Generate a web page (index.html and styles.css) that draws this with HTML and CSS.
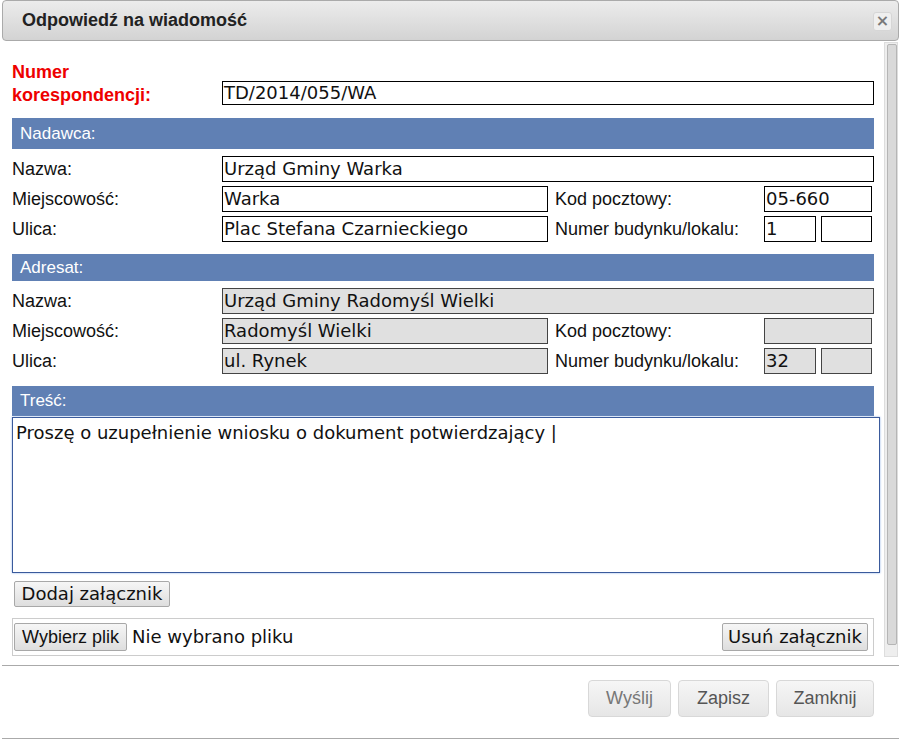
FILE: index.html
```html
<!DOCTYPE html>
<html lang="pl">
<head>
<meta charset="utf-8">
<title>Odpowiedź na wiadomość</title>
<link rel="stylesheet" href="styles.css">
</head>
<body>
<div class="dialog">
  <div class="titlebar">
    <span class="title">Odpowiedź na wiadomość</span>
    <span class="close">×</span>
  </div>
  <div class="main">
    <div class="content">
      <div class="row-top">
        <div class="req">Numer<br>korespondencji:</div>
        <div class="field field-top">TD/2014/055/WA</div>
      </div>

      <div class="bar bar-nad">Nadawca:</div>
      <div class="grid">
        <div class="lbl">Nazwa:</div>
        <div class="field span3">Urząd Gminy Warka</div>
        <div class="lbl">Miejscowość:</div>
        <div class="field">Warka</div>
        <div class="lbl lbl2">Kod pocztowy:</div>
        <div class="field small">05-660</div>
        <div class="lbl">Ulica:</div>
        <div class="field">Plac Stefana Czarnieckiego</div>
        <div class="lbl lbl2">Numer budynku/lokalu:</div>
        <div class="pair"><div class="field n1">1</div><div class="field n2"></div></div>
      </div>

      <div class="bar bar-adr">Adresat:</div>
      <div class="grid ro">
        <div class="lbl">Nazwa:</div>
        <div class="field span3">Urząd Gminy Radomyśl Wielki</div>
        <div class="lbl">Miejscowość:</div>
        <div class="field">Radomyśl Wielki</div>
        <div class="lbl lbl2">Kod pocztowy:</div>
        <div class="field small"></div>
        <div class="lbl">Ulica:</div>
        <div class="field">ul. Rynek</div>
        <div class="lbl lbl2">Numer budynku/lokalu:</div>
        <div class="pair"><div class="field n1">32</div><div class="field n2"></div></div>
      </div>

      <div class="bar bar-tre">Treść:</div>
      <div class="textarea">Proszę o uzupełnienie wniosku o dokument potwierdzający |</div>

      <button class="btn-plain btn-add">Dodaj załącznik</button>

      <div class="filebox">
        <button class="btn-file">Wybierz plik</button>
        <span class="nofile">Nie wybrano pliku</span>
        <button class="btn-plain btn-remove">Usuń załącznik</button>
      </div>
    </div>
    <div class="scrollbar"><div class="thumb"></div></div>
  </div>
  <div class="footer">
    <button class="fbtn w-send">Wyślij</button>
    <button class="fbtn w-save">Zapisz</button>
    <button class="fbtn w-close">Zamknij</button>
  </div>
</div>
</body>
</html>
```

FILE: styles.css
```css
* { box-sizing: border-box; }

html, body {
  margin: 0;
  padding: 0;
  background: #ffffff;
}

body {
  font-family: "Liberation Sans", Arial, sans-serif;
  font-size: 18px;
  color: #111;
}

.dialog {
  margin-left: 2px;
  width: 897px;
  height: 741px;
  display: flex;
  flex-direction: column;
}

.titlebar {
  height: 41px;
  border: 1px solid #aaaaaa;
  border-radius: 4px;
  background: linear-gradient(#ececec, #d3d3d3);
  display: flex;
  align-items: center;
  justify-content: space-between;
  padding: 0 6px 0 19px;
}

.title {
  font-weight: bold;
  font-size: 18px;
  color: #222;
}

.close {
  width: 19px;
  height: 19px;
  margin-top: 1px;
  border: 1px solid #d6d6d6;
  border-radius: 3px;
  background: #efefef;
  color: #7a7a7a;
  font-family: "DejaVu Sans", sans-serif;
  font-weight: bold;
  font-size: 16px;
  line-height: 16px;
  text-align: center;
}

.main {
  height: 625px;
  display: flex;
  border-bottom: 1px solid #aaaaaa;
}

.content {
  width: 882px;
  padding: 20px 0 0 10px;
  display: flex;
  flex-direction: column;
  align-items: flex-start;
}

.row-top {
  display: grid;
  grid-template-columns: 210px 652px;
  align-items: end;
}

.req {
  color: #ee0000;
  font-weight: bold;
  line-height: 23px;
}

.field {
  height: 26px;
  border: 1px solid #000;
  background: #fff;
  font-family: "DejaVu Sans", sans-serif;
  font-size: 18px;
  line-height: 24px;
  padding-left: 1px;
  white-space: nowrap;
  overflow: hidden;
}

.field-top {
  height: 24px;
  line-height: 22px;
  margin-bottom: 2px;
}

.bar {
  width: 862px;
  background: #6080b4;
  color: #fff;
  font-size: 17px;
  padding-left: 8px;
  display: flex;
  align-items: center;
}

.bar-nad { margin-top: 11px; height: 31px; }
.bar-adr { margin-top: 12px; height: 27px; }
.bar-tre { margin-top: 12px; height: 30px; }

.grid {
  margin-top: 7px;
  display: grid;
  grid-template-columns: 210px 326px 216px 110px;
  grid-auto-rows: 26px;
  row-gap: 4px;
  align-items: center;
}

.lbl { line-height: 26px; }
.lbl2 { padding-left: 7px; }

.span3 { grid-column: 2 / 5; }

.small { width: 108px; }

.pair {
  display: flex;
  gap: 5px;
  width: 108px;
}
.n1 { width: 52px; }
.n2 { width: 51px; }

.ro .field {
  background: #e0e0e0;
  border-color: #444;
}

.textarea {
  margin-top: 1px;
  width: 868px;
  height: 156px;
  border: 1px solid #3a5a9c;
  box-shadow: 0 0 2px #8fb0e6;
  font-family: "DejaVu Sans", sans-serif;
  font-size: 18px;
  padding: 4px 0 0 3px;
  white-space: nowrap;
}

button {
  font-family: "DejaVu Sans", sans-serif;
  font-size: 18px;
  color: #111;
  margin: 0;
  cursor: default;
}

.btn-plain {
  height: 26px;
  padding: 0;
  border: 1px solid #a8a8a8;
  border-radius: 2px;
  background: linear-gradient(#f6f6f6, #dedede);
  line-height: 22px;
}

.btn-add {
  margin: 8px 0 0 2px;
  width: 156px;
}

.filebox {
  margin-top: 11px;
  width: 862px;
  height: 38px;
  border: 1px solid #cccccc;
  padding: 4px 5px 0 1px;
  display: flex;
  align-items: flex-start;
}

.btn-file {
  font-family: "Liberation Sans", Arial, sans-serif;
  height: 28px;
  width: 113px;
  padding: 0;
  border: 1px solid #a8a8a8;
  border-radius: 2px;
  background: linear-gradient(#f6f6f6, #dedede);
}

.nofile {
  font-family: "DejaVu Sans", sans-serif;
  margin-left: 5px;
  line-height: 28px;
}

.btn-remove {
  margin-left: auto;
  height: 28px;
  width: 146px;
}

.scrollbar {
  margin-top: 1px;
  width: 14px;
  height: 615px;
  background: #eeeeee;
  border: 1px solid #dddddd;
  padding: 1px 0 0 2px;
}

.thumb {
  width: 10px;
  height: 601px;
  background: #d9d9d9;
  border: 1px solid #b5b5b5;
  border-radius: 2px;
}

.footer {
  height: 73px;
  border-bottom: 1px solid #aaaaaa;
  display: flex;
  justify-content: flex-end;
  align-items: flex-start;
  gap: 7px;
  padding: 14px 25px 0 0;
}

.fbtn {
  font-family: "Liberation Sans", Arial, sans-serif;
  font-size: 18px;
  color: #555;
  height: 37px;
  border: 1px solid #d8d8d8;
  border-radius: 4px;
  background: linear-gradient(#f6f6f6, #e6e6e6);
  padding: 0;
}

.w-send { width: 83px; color: #777; }
.w-save { width: 91px; }
.w-close { width: 98px; }
```
